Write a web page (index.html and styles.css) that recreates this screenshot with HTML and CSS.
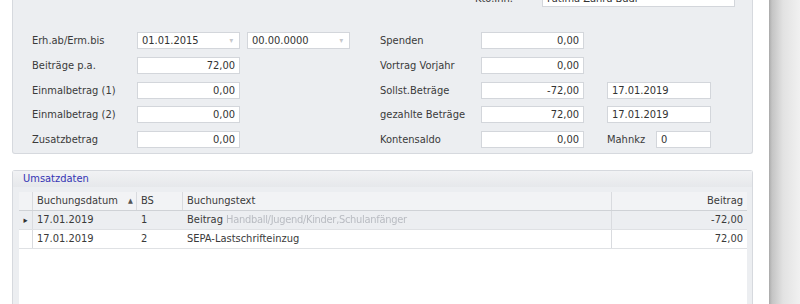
FILE: index.html
```html
<!DOCTYPE html>
<html lang="de">
<head>
    <meta charset="UTF-8">
    <title>Konto - Umsatzdaten</title>
    <link rel="stylesheet" href="styles.css">
</head>
<body>
    <div class="window">
        <div class="panel">
            <div class="owner-row">
                <span class="owner-label">Kto.Inh.</span>
                <div class="field owner-field">Fatima Zahra Badr</div>
            </div>

            <div class="form-grid">
                <span class="label c1">Erh.ab/Erm.bis</span>
                <div class="field combo c2">01.01.2015<span class="arrow">&#9662;</span></div>
                <div class="field combo c4">00.00.0000<span class="arrow">&#9662;</span></div>
                <span class="label c6">Spenden</span>
                <div class="field num c7">0,00</div>

                <span class="label c1">Beitr&auml;ge p.a.</span>
                <div class="field num c2">72,00</div>
                <span class="label c6">Vortrag Vorjahr</span>
                <div class="field num c7">0,00</div>

                <span class="label c1">Einmalbetrag (1)</span>
                <div class="field num c2">0,00</div>
                <span class="label c6">Sollst.Betr&auml;ge</span>
                <div class="field num c7">-72,00</div>
                <div class="field c9">17.01.2019</div>

                <span class="label c1">Einmalbetrag (2)</span>
                <div class="field num c2">0,00</div>
                <span class="label c6">gezahlte Betr&auml;ge</span>
                <div class="field num c7">72,00</div>
                <div class="field c9">17.01.2019</div>

                <span class="label c1">Zusatzbetrag</span>
                <div class="field num c2">0,00</div>
                <span class="label c6">Kontensaldo</span>
                <div class="field num c7">0,00</div>
                <div class="mahn c9">
                    <span class="label">Mahnkz</span>
                    <div class="field mahn-field">0</div>
                </div>
            </div>
        </div>

        <div class="group">
            <div class="group-caption">Umsatzdaten</div>
            <div class="group-body">
                <div class="grid">
                    <div class="grid-row grid-head">
                        <div class="cell ind"></div>
                        <div class="cell">Buchungsdatum<span class="sort">&#9650;</span></div>
                        <div class="cell">BS</div>
                        <div class="cell">Buchungstext</div>
                        <div class="cell right">Beitrag</div>
                    </div>
                    <div class="grid-row selected">
                        <div class="cell ind">&#9656;</div>
                        <div class="cell">17.01.2019</div>
                        <div class="cell plain">1</div>
                        <div class="cell plain">Beitrag <span class="smudge">Handball/Jugend/Kinder,Schulanf&auml;nger</span></div>
                        <div class="cell right">-72,00</div>
                    </div>
                    <div class="grid-row">
                        <div class="cell ind"></div>
                        <div class="cell">17.01.2019</div>
                        <div class="cell plain">2</div>
                        <div class="cell plain">SEPA-Lastschrifteinzug</div>
                        <div class="cell right">72,00</div>
                    </div>
                </div>
            </div>
        </div>
    </div>
    <div class="shadow"></div>
</body>
</html>
```

FILE: styles.css
```css
body {
    margin: 0;
    width: 800px;
    height: 304px;
    overflow: hidden;
    display: flex;
    background-color: #fff;
    font-family: "DejaVu Sans Condensed", "DejaVu Sans", sans-serif;
    font-stretch: condensed;
    font-size: 11px;
    color: #3a3a3a;
}

.window {
    width: 769px;
    padding: 0 16px 0 12px;
    box-sizing: border-box;
}

.shadow {
    flex: 1;
    background: linear-gradient(to right, #a9a9a9 0, #c4c4c4 3px, #e2e2e2 14px, #f1f1f1 100%);
}

/* upper panel */
.panel {
    margin-top: -14px;
    padding: 4px 17px 5px 19px;
    background-color: #eceef1;
    border: 1px solid #d6d9de;
    border-top: none;
    border-radius: 0 0 3px 3px;
}

.owner-row {
    display: flex;
    justify-content: flex-end;
    align-items: center;
    height: 17px;
}

.owner-label {
    width: 67px;
}

.owner-field {
    width: 193px;
}

.form-grid {
    margin-top: 25px;
    display: grid;
    grid-template-columns: 105px 103px 7px 103px 30px 101px 103px 23px 104px;
    grid-auto-rows: 17px;
    row-gap: 7.75px;
    align-items: center;
}

.c1 { grid-column: 1; }
.c2 { grid-column: 2; }
.c4 { grid-column: 4; }
.c6 { grid-column: 6; }
.c7 { grid-column: 7; }
.c9 { grid-column: 9; }

.label {
    white-space: nowrap;
}

.field {
    height: 17px;
    box-sizing: border-box;
    background-color: #fff;
    border: 1px solid #d3d6db;
    padding: 0 4px;
    line-height: 15px;
    color: #333;
    white-space: nowrap;
    display: flex;
    align-items: center;
}

.num {
    justify-content: flex-end;
}

.combo {
    justify-content: space-between;
}

.arrow {
    color: #c6c8cc;
    font-size: 8px;
    padding-right: 2px;
}

.mahn {
    display: flex;
    align-items: center;
    justify-content: space-between;
}

.mahn-field {
    width: 55px;
}

/* lower group */
.group {
    margin-top: 16px;
    border: 1px solid #d6d9de;
    border-bottom: none;
    border-radius: 3px 3px 0 0;
    background-color: #eceef1;
}

.group-caption {
    height: 16px;
    line-height: 16px;
    padding-left: 10px;
    color: #3434b4;
    background: linear-gradient(#f1f2f4, #e6e8eb);
}

.group-body {
    padding: 5px 5px 0 6px;
    height: 112px;
}

.grid {
    background-color: #fff;
    height: 100%;
}

.grid-row {
    display: grid;
    grid-template-columns: 14px 104px 46px 429px 1fr;
    height: 18px;
    border-bottom: 1px solid #dfe1e4;
    line-height: 18px;
}

.grid-head {
    background-color: #f2f3f5;
    border-bottom-color: #cfd2d6;
}

.grid-head .cell {
    border-right: 1px solid #d9dbdf;
}

.grid-head .cell:last-child {
    border-right: none;
}

.cell {
    padding-left: 4px;
    white-space: nowrap;
    overflow: hidden;
}

.cell.ind {
    padding-left: 0;
    text-align: center;
    font-size: 9px;
    color: #333;
    border-right: 1px solid #d9dbdf;
}

.cell.right {
    text-align: right;
    padding-right: 4px;
}

.grid-row .cell:nth-child(4) {
    border-right: 1px solid #d9dbdf;
}

.sort {
    font-size: 7px;
    margin-left: 10px;
    color: #555;
    vertical-align: 1px;
}

.selected {
    background-color: #eceef1;
}

.smudge {
    color: #b9bcc2;
    filter: blur(0.6px);
    letter-spacing: -0.3px;
}
```
